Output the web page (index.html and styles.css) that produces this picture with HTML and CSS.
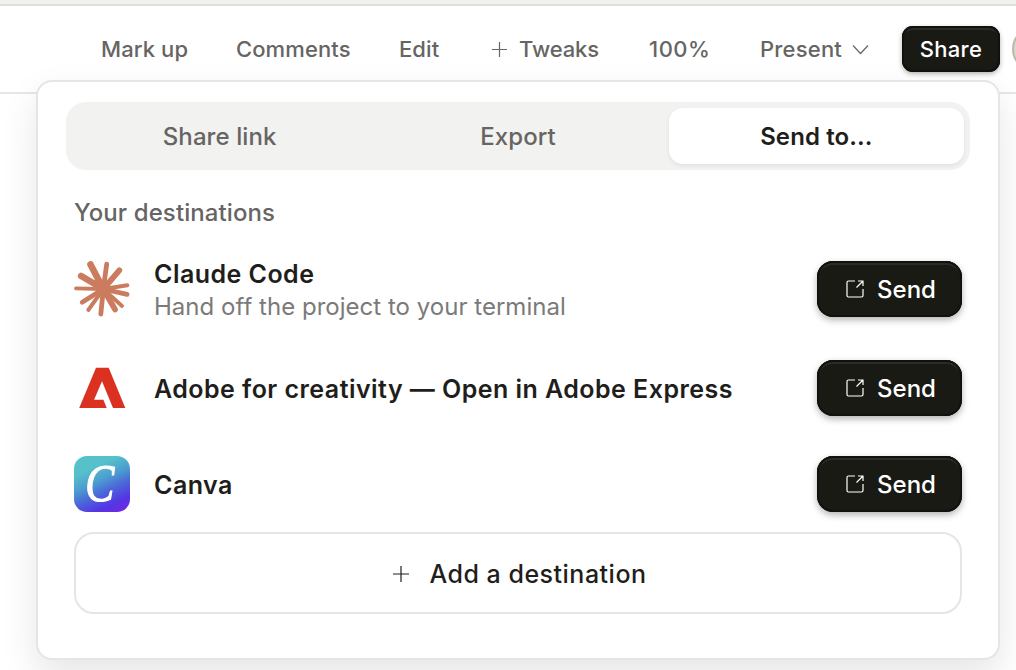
FILE: index.html
```html
<!DOCTYPE html>
<html lang="en">
  <head>
    <meta charset="utf-8" />
    <title>Share</title>
    <link rel="stylesheet" href="styles.css">
  </head>
  <body>
    <header class="toolbar">
      <span>Mark up</span>
      <span>Comments</span>
      <span>Edit</span>
      <span class="tool">
        <svg width="17" height="17" viewBox="0 0 17 17"><path d="M8.5 1v15M1 8.5h15" /></svg>
        <span>Tweaks</span>
      </span>
      <span class="zoom">100%</span>
      <span class="tool present">
        <span>Present</span>
        <svg width="17" height="17" viewBox="0 0 17 17"><path d="M1 4.5l7.5 8 7.5-8" /></svg>
      </span>
      <button class="share">Share</button>
      <span class="avatar"></span>
    </header>

    <main class="panel">
      <div class="tabs">
        <div class="tab">Share link</div>
        <div class="tab">Export</div>
        <div class="tab active">Send to...</div>
      </div>
      <div class="content">
        <h2>Your destinations</h2>
        <div class="row">
          <svg class="logo claude" viewBox="0 0 56 56">
            <path stroke-width="6.6" d="M29.3 28L16.5 3.4M29.3 28L7.2 15" />
            <path stroke-width="5.8" d="M29.3 28L45.3 9.3M29.3 28L41 48.4" />
            <path stroke-width="4.8" d="M29.3 28L32.7 3.2M29.3 28L53 33.4M29.3 28L26.8 53M29.3 28L8.2 41.2" />
            <path stroke-width="3.9" d="M29.3 28L53.4 24.2M29.3 28L48 45M29.3 28L14.3 49M29.3 28L2 27.4" />
            <circle cx="29.500" cy="28.500" r="6.500" />
          </svg>
          <div class="info">
            <div class="name">Claude Code</div>
            <div class="desc">Hand off the project to your terminal</div>
          </div>
          <button class="send">
            <svg width="18" height="18" viewBox="0 0 18 18"><path d="M9 1H2.5Q1 1 1 2.5v13Q1 17 2.5 17h13q1.5 0 1.5-1.5V9M12 1h5v5M17 1l-6.5 6.5" /></svg>
            <span>Send</span>
          </button>
        </div>
        <div class="row">
          <svg class="logo" viewBox="0 0 56 56">
            <path fill="#da3120" d="M22 7.7h12.7L51.3 48H39L28 21.3 20.1 39.7h9.3L32.7 48H5.200z" />
          </svg>
          <div class="info">
            <div class="name">Adobe for creativity — Open in Adobe Express</div>
          </div>
          <button class="send">
            <svg width="18" height="18" viewBox="0 0 18 18"><path d="M9 1H2.5Q1 1 1 2.5v13Q1 17 2.5 17h13q1.5 0 1.5-1.5V9M12 1h5v5M17 1l-6.5 6.5" /></svg>
            <span>Send</span>
          </button>
        </div>
        <div class="row">
          <div class="logo canva"><span>C</span></div>
          <div class="info">
            <div class="name">Canva</div>
          </div>
          <button class="send">
            <svg width="18" height="18" viewBox="0 0 18 18"><path d="M9 1H2.5Q1 1 1 2.5v13Q1 17 2.5 17h13q1.5 0 1.5-1.5V9M12 1h5v5M17 1l-6.5 6.5" /></svg>
            <span>Send</span>
          </button>
        </div>
        <button class="add">
          <svg width="18" height="18" viewBox="0 0 18 18"><path d="M9 1v16M1 9h16" /></svg>
          <span>Add a destination</span>
        </button>
      </div>
    </main>
  </body>
</html>
```
FILE: styles.css
```css
* {
  box-sizing: border-box;
}
body {
  margin: 0;
  height: 670px;
  overflow: hidden;
  background: #fff;
  font-family: Inter, sans-serif;
  color: #1f1e1b;
}
button {
  font-family: inherit;
  border: none;
  padding: 0;
}
svg {
  flex: none;
  fill: none;
  stroke: currentColor;
  stroke-width: 1.2;
}
.toolbar {
  display: grid;
  grid-template-columns: 135px 163px 92px 158px 111px 142px 98px 24px;
  align-items: center;
  height: 94px;
  padding: 2px 0 0 101px;
  border-top: 4px solid #f2f1ee;
  border-bottom: 2px solid #e7e7e7;
  box-shadow: inset 0 2px #dfdfde;
  font-size: 22px;
  font-weight: 500;
  letter-spacing: 0.1px;
  color: #666563;
  white-space: nowrap;
}
.tool {
  display: flex;
  align-items: center;
  gap: 11px;
  letter-spacing: -0.1px;
}
.zoom {
  letter-spacing: 0.5px;
}
.present {
  letter-spacing: 0.2px;
  gap: 10px;
}
.share {
  height: 46px;
  border-radius: 11px;
  background: #1a1a15;
  color: #fff;
  font-size: 22px;
  font-weight: 500;
  letter-spacing: 0.3px;
  box-shadow: inset 0 0 0 2px #11110d, inset 0 4px #2b2b27, 0 2px 5px rgba(0, 0, 0, 0.3);
}
.avatar {
  width: 46px;
  height: 46px;
  margin-left: 12px;
  border: 2px solid #bdb8aa;
  border-radius: 50%;
  background: #ddd8cb;
}
.panel {
  position: absolute;
  left: 36px;
  top: 80px;
  width: 964px;
  height: 580px;
  padding: 20px 28px;
  border: 2px solid #e5e5e5;
  border-radius: 16px;
  background: #fff;
  box-shadow: 0 16px 36px rgba(0, 0, 0, 0.1);
}
.tabs {
  display: grid;
  grid-template-columns: repeat(3, 1fr);
  gap: 3px;
  height: 68px;
  padding: 6px;
  border-radius: 20px;
  background: #f2f2f0;
}
.tab {
  display: flex;
  align-items: center;
  justify-content: center;
  border-radius: 14px;
  font-size: 24px;
  font-weight: 500;
  letter-spacing: 0.1px;
  color: #666563;
}
.tab.active {
  background: #fff;
  color: #1f1e1b;
  font-weight: 600;
  box-shadow: 0 2px 4px rgba(0, 0, 0, 0.07);
}
.content {
  padding: 0 8px;
}
h2 {
  margin: 28px 0 0;
  font-size: 24px;
  line-height: 30px;
  font-weight: 500;
  letter-spacing: 0.1px;
  color: #666563;
}
.row {
  display: flex;
  align-items: center;
  height: 96px;
}
h2 + .row {
  height: 102px;
  margin-top: 10px;
}
.logo {
  flex: none;
  width: 56px;
  height: 56px;
  stroke: none;
}
.claude {
  fill: #cb7c5e;
  stroke: #cb7c5e;
  stroke-linecap: round;
}
.canva {
  display: flex;
  align-items: center;
  justify-content: center;
  border-radius: 13px;
  background: linear-gradient(155deg, #56c0cb 25%, #4b9cd0 45%, #4a6ad8 60%, #5436e4 80%, #7029e0 95%);
  color: #fff;
  font: italic 53px/56px "Liberation Serif", serif;
}
.canva span {
  transform: translate(-2px, -1px) scaleX(0.82);
  -webkit-text-stroke: 1.2px #fff;
}
.info {
  flex: 1;
  padding: 2px 0 0 24px;
  white-space: nowrap;
}
.name {
  font-size: 25px;
  font-weight: 600;
  line-height: 32px;
  letter-spacing: 0.46px;
}
.desc {
  font-size: 24px;
  line-height: 34px;
  margin-bottom: -2px;
  letter-spacing: 0.02px;
  color: #7b7a78;
}
.send {
  display: flex;
  align-items: center;
  justify-content: center;
  gap: 13px;
  width: 145px;
  height: 56px;
  padding-left: 3px;
  border-radius: 16px;
  background: #1a1a15;
  color: #fff;
  font-size: 24px;
  font-weight: 500;
  letter-spacing: 0;
  box-shadow: inset 0 0 0 2px #11110d, inset 0 4px #2b2b27, 0 3px 7px rgba(0, 0, 0, 0.3);
}
.add {
  display: flex;
  align-items: center;
  justify-content: center;
  gap: 19px;
  width: 100%;
  height: 82px;
  padding: 1px 0 0 3px;
  border: 2px solid #e5e5e5;
  border-radius: 20px;
  background: #fff;
  color: #1f1e1b;
  font-size: 25px;
  font-weight: 500;
  letter-spacing: 0.5px;
}
```
